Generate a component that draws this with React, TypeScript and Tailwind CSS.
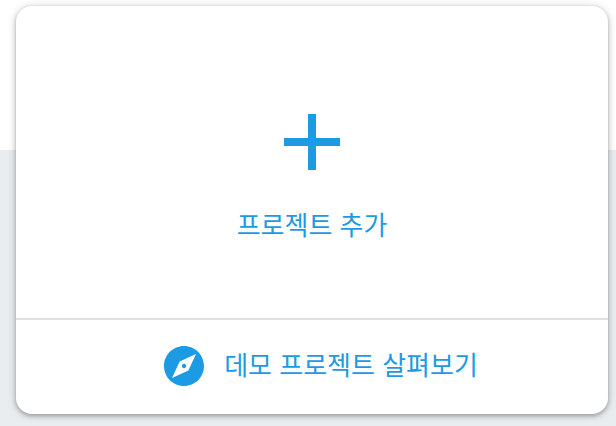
export default function App() {
  return (
    <main className="min-h-screen bg-linear-to-b from-white from-[150px] to-[#e9edf0] to-[150px] pt-1.5 pr-2 pb-3 pl-4 font-['Liberation_Sans','Noto_Sans_CJK_KR',sans-serif] text-[#1c9be4]">
      <section className="overflow-hidden rounded-2xl bg-white shadow-[0_2px_4px_rgba(0,0,0,0.24),0_1px_8px_rgba(0,0,0,0.2)]">
        <button type="button" className="flex h-78 w-full flex-col items-center justify-center gap-9 pt-9 text-[26px] leading-10">
          <svg className="size-14" viewBox="0 0 56 56" fill="currentColor" aria-hidden="true">
            <path d="M24 0h8v24h24v8H32v24h-8V32H0v-8h24z" />
          </svg>
          <span>프로젝트 추가</span>
        </button>
        <button type="button" className="flex h-24 w-full items-center justify-center gap-5 border-t-2 border-[#e0e0e0] pb-0.5 pl-[18px] text-[26px] leading-10">
          <svg className="size-10" viewBox="2 2 20 20" fill="currentColor" aria-hidden="true">
            <path d="M12 10.9c-.61 0-1.1.49-1.1 1.1s.49 1.1 1.1 1.1c.61 0 1.1-.49 1.1-1.1s-.49-1.1-1.1-1.1zM12 2C6.48 2 2 6.48 2 12s4.48 10 10 10 10-4.48 10-10S17.52 2 12 2zm2.19 12.19L6 18l3.81-8.19L18 6l-3.81 8.19z" />
          </svg>
          <span>데모 프로젝트 살펴보기</span>
        </button>
      </section>
    </main>
  );
}
